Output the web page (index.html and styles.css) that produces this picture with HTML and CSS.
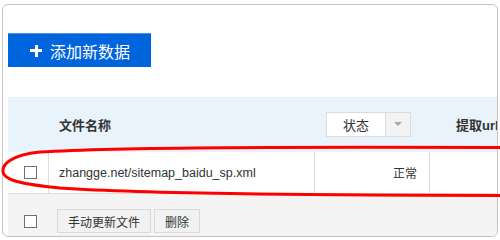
FILE: index.html
```html
<!DOCTYPE html>
<html lang="zh-CN">
<head>
    <meta charset="UTF-8">
    <title>Sitemap</title>
    <link rel="stylesheet" href="styles.css">
</head>
<body>
    <div class="panel">
        <button class="btn-add"><span class="plus"></span>添加新数据</button>

        <div class="table">
            <div class="row head">
                <div class="cell check"></div>
                <div class="cell name">文件名称</div>
                <div class="cell status">
                    <div class="select">
                        <span class="select-text">状态</span>
                        <span class="select-arrow"></span>
                    </div>
                </div>
                <div class="cell url">提取url</div>
            </div>
            <div class="row data">
                <div class="cell check"><span class="box"></span></div>
                <div class="cell name">zhangge.net/sitemap_baidu_sp.xml</div>
                <div class="cell status">正常</div>
                <div class="cell url"></div>
            </div>
            <div class="row foot">
                <div class="cell check"><span class="box"></span></div>
                <button class="btn">手动更新文件</button>
                <button class="btn">删除</button>
            </div>
        </div>
    </div>

    <!-- red mark drawn over the row -->
    <svg class="mark" width="500" height="240" viewBox="0 0 500 240">
        <path d="M 502 147.5 C 300 147, 120 147, 40 152 C 10 155, 2 165, 3 172 C 4 180, 20 184, 60 188 C 150 194, 320 195, 502 195.5"
              fill="none" stroke="#ff0000" stroke-width="3"/>
    </svg>
</body>
</html>
```

FILE: styles.css
```css
*{
    box-sizing: border-box;
}
body{
    margin: 0;
    position: relative;
    font-family: "Liberation Sans", "Noto Sans CJK SC", sans-serif;
    color: #333;
    background: #fff;
}
.panel{
    margin: 4px 0 0 2px;
    width: 496px;
    height: 233px;
    border: 1px solid #cbbfbf;
    border-radius: 6px;
    padding: 28px 0 0 5px;
    overflow: hidden;
}
.btn-add{
    display: flex;
    align-items: center;
    width: 143px;
    height: 34px;
    margin: 0 0 30px 0;
    padding: 0 0 0 22px;
    border: 0;
    border-top: 1px solid #4d94ea;
    background: #0064dc;
    color: #fff;
    font-family: "Noto Sans CJK SC", sans-serif;
    font-size: 16px;
}
.plus{
    position: relative;
    width: 12px;
    height: 12px;
    margin-right: 8px;
}
.plus::before,.plus::after{
    content: "";
    position: absolute;
    background: #fff;
}
.plus::before{
    left: 0;
    top: 4.5px;
    width: 12px;
    height: 3px;
}
.plus::after{
    left: 4.5px;
    top: 0;
    width: 3px;
    height: 12px;
}
.table{
    width: 620px;
}
.row{
    display: flex;
    align-items: center;
}
.cell{
    height: 100%;
    display: flex;
    align-items: center;
}
.check{
    width: 40px;
    padding-left: 16px;
}
.name{
    width: 266px;
    padding-left: 10px;
}
.status{
    width: 115px;
}
.url{
    flex: 1;
}
.head{
    height: 55px;
    background: #e9f3fc;
}
.head .name{
    padding-left: 11px;
    font-family: "Noto Sans CJK SC", sans-serif;
    font-weight: bold;
    font-size: 13px;
}
.head .status{
    padding-left: 12px;
}
.head .url{
    padding-left: 27px;
    font-weight: bold;
    font-size: 13px;
}
.select{
    display: flex;
    height: 25px;
    border: 1px solid #dcdcdc;
    background: #fff;
}
.select-text{
    width: 59px;
    display: flex;
    align-items: center;
    justify-content: center;
    font-family: "Noto Sans CJK SC", sans-serif;
    font-size: 13px;
    border-right: 1px solid #dcdcdc;
}
.select-arrow{
    width: 24px;
    background: #f3f3f3;
    position: relative;
}
.select-arrow::after{
    content: "";
    position: absolute;
    left: 8px;
    top: 9px;
    border-left: 4px solid transparent;
    border-right: 4px solid transparent;
    border-top: 4px solid #a9a9a9;
}
.data{
    height: 42px;
    border-bottom: 1px solid #dddddd;
}
.data .name,.data .status,.data .url{
    border-left: 1px solid #dddddd;
}
.data .name{
    font-size: 12.5px;
}
.data .status{
    justify-content: flex-end;
    padding-right: 12px;
    font-size: 12px;
}
.box{
    display: block;
    width: 13px;
    height: 13px;
    border: 1px solid #6f6f6f;
    background: #fff;
}
.foot{
    height: 54px;
    background: #f4f4f4;
}
.btn{
    height: 24px;
    padding: 0 10px;
    margin-left: 9px;
    border: 1px solid #dadada;
    background: #f2f2f2;
    color: #333;
    font-family: "Noto Sans CJK SC", sans-serif;
    font-size: 12px;
}
.btn + .btn{
    margin-left: 3px;
}
.mark{
    position: absolute;
    left: 0;
    top: 0;
    pointer-events: none;
}
```
